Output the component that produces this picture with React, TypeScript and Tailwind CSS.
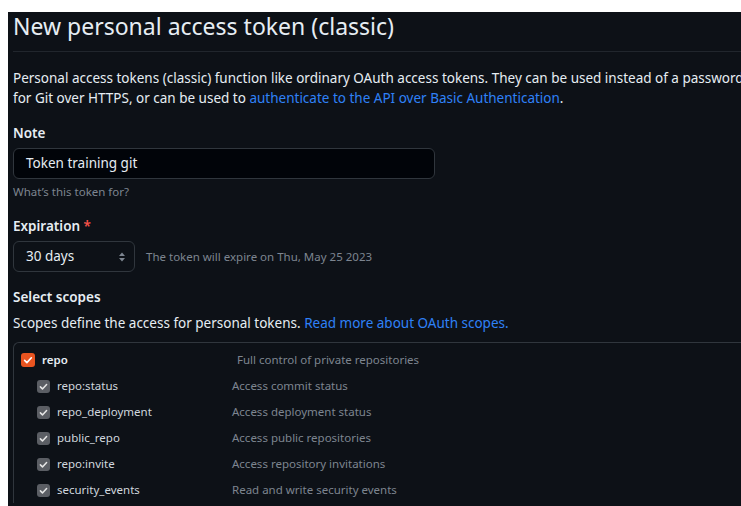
import React from "react";

const font = { fontFamily: '"Noto Sans", "Open Sans", sans-serif' };

function Check({ className }: { className?: string }) {
  return (
    <svg viewBox="0 0 16 16" className={className} fill="none">
      <path d="M3.5 8.5l3 3 6-6.5" stroke="currentColor" strokeWidth="2.2" strokeLinecap="round" strokeLinejoin="round" />
    </svg>
  );
}

const subScopes: [string, string][] = [
  ["repo:status", "Access commit status"],
  ["repo_deployment", "Access deployment status"],
  ["public_repo", "Access public repositories"],
  ["repo:invite", "Access repository invitations"],
  ["security_events", "Read and write security events"],
];

export default function App() {
  return (
    <div className="w-[741px] h-[506px] overflow-hidden bg-white pt-[12px] pl-[8px]" style={font}>
      <div className="h-[494px] w-[760px] bg-[#0d1117] pl-[5px] text-[#e6edf3]">
        {/* heading */}
        <div className="border-b border-[#21262d] pb-[11px]">
          <h2 className="text-[23px] leading-[28px] font-normal text-[#e6edf3]">New personal access token (classic)</h2>
        </div>

        <p className="mt-[16px] text-[13.5px] leading-[20px] whitespace-nowrap text-[#e6edf3]">
          Personal access tokens (classic) function like ordinary OAuth access tokens. They can be used instead of a password
          <br />
          for Git over HTTPS, or can be used to{" "}
          <a className="text-[#2f81f7]">authenticate to the API over Basic Authentication</a>.
        </p>

        {/* note */}
        <div className="mt-[15px] text-[13.5px] leading-[20px] font-semibold">Note</div>
        <div className="mt-[5px] flex h-[31px] w-[422px] items-center rounded-[6px] border border-[#30363d] bg-[#010409] pl-[12px] text-[13.5px]">
          Token training git
        </div>
        <div className="mt-[4px] text-[11.5px] leading-[18px] text-[#7d8590]">What’s this token for?</div>

        {/* expiration */}
        <div className="mt-[15px] text-[13.5px] leading-[20px] font-semibold">
          Expiration <span className="text-[#f85149]">*</span>
        </div>
        <div className="mt-[5px] flex items-center">
          <div className="flex h-[31px] w-[122px] items-center justify-between rounded-[6px] border border-[#30363d] bg-[#0d1117] pl-[12px] pr-[8px] text-[13.5px]">
            <span>30 days</span>
            <svg viewBox="0 0 8 12" className="h-[12px] w-[8px] text-[#7d8590]" fill="currentColor">
              <path d="M4 1.5L7 5H1z" />
              <path d="M4 10.5L1 7h6z" />
            </svg>
          </div>
          <span className="ml-[11px] text-[11.5px] text-[#7d8590]">The token will expire on Thu, May 25 2023</span>
        </div>

        {/* scopes */}
        <div className="mt-[15px] text-[13.5px] leading-[20px] font-semibold">Select scopes</div>
        <p className="mt-[6px] text-[13.5px] leading-[20px]">
          Scopes define the access for personal tokens.{" "}
          <a className="text-[#2f81f7]">Read more about OAuth scopes.</a>
        </p>

        <div className="mt-[9px] rounded-tl-[6px] border-l border-t border-[#30363d] pt-[4px] text-[11.5px]">
          <div className="flex h-[26px] items-center">
            <div className="ml-[7px] flex h-[14px] w-[14px] items-center justify-center rounded-[3px] bg-[#e95420] text-white">
              <Check className="h-[12px] w-[12px]" />
            </div>
            <span className="ml-[7px] w-[195px] font-semibold text-[#e6edf3]">repo</span>
            <span className="text-[#7d8590]">Full control of private repositories</span>
          </div>
          {subScopes.map(([name, desc]) => (
            <div key={name} className="flex h-[26px] items-center">
              <div className="ml-[23px] flex h-[13px] w-[13px] items-center justify-center rounded-[3px] bg-[#5b5e64] text-[#e6e6e6]">
                <Check className="h-[11px] w-[11px]" />
              </div>
              <span className="ml-[7px] w-[175px] text-[#d0d7de]">{name}</span>
              <span className="text-[#7d8590]">{desc}</span>
            </div>
          ))}
        </div>
      </div>
    </div>
  );
}
